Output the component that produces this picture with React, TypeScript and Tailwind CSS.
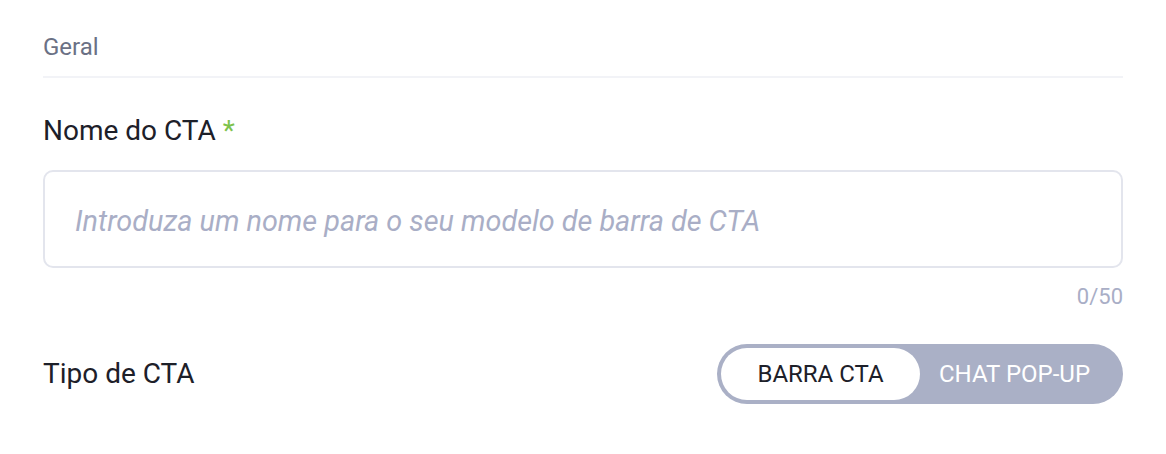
import { useState } from "react";

export default function App() {
  const [tipo, setTipo] = useState<"barra" | "chat">("barra");

  return (
    <div className="min-h-[454px] bg-white font-['Roboto',sans-serif]">
      <div className="mx-[43px] pt-[32px]">
        <h3 className="border-b-2 border-[#f2f3f7] pb-[14px] text-[24px] leading-[30px] text-[#6b7185]">Geral</h3>

        <label className="mt-[36px] block text-[28px] leading-[34px] text-[#1d2029]">
          Nome do CTA <span className="text-[#7dc24b]">*</span>
        </label>

        <input
          type="text"
          placeholder="Introduza um nome para o seu modelo de barra de CTA"
          className="mt-[22px] h-[98px] w-full rounded-[10px] border-2 border-[#e3e5ed] px-[30px] pt-[4px] text-[28.8px] italic text-[#1d2029] outline-none placeholder:text-[#a9aec6]"
        />
        <div className="mt-[15px] text-right text-[22px] leading-[28px] text-[#a9aec6]">0/50</div>

        <div className="mt-[33px] flex items-center justify-between">
          <span className="text-[28px] leading-[34px] text-[#1d2029]">Tipo de CTA</span>
          <div className="flex h-[60px] w-[406px] items-center rounded-full bg-[#aab0c6] p-[4px]">
            <button
              onClick={() => setTipo("barra")}
              className={`h-full w-[199px] rounded-full text-[24px] uppercase ${
                tipo === "barra" ? "bg-white text-[#1d2029]" : "text-white"
              }`}
            >
              Barra CTA
            </button>
            <button
              onClick={() => setTipo("chat")}
              className={`h-full flex-1 rounded-full pr-[10px] text-[24px] uppercase ${
                tipo === "chat" ? "bg-white text-[#1d2029]" : "text-white"
              }`}
            >
              Chat Pop-up
            </button>
          </div>
        </div>
      </div>
    </div>
  );
}
